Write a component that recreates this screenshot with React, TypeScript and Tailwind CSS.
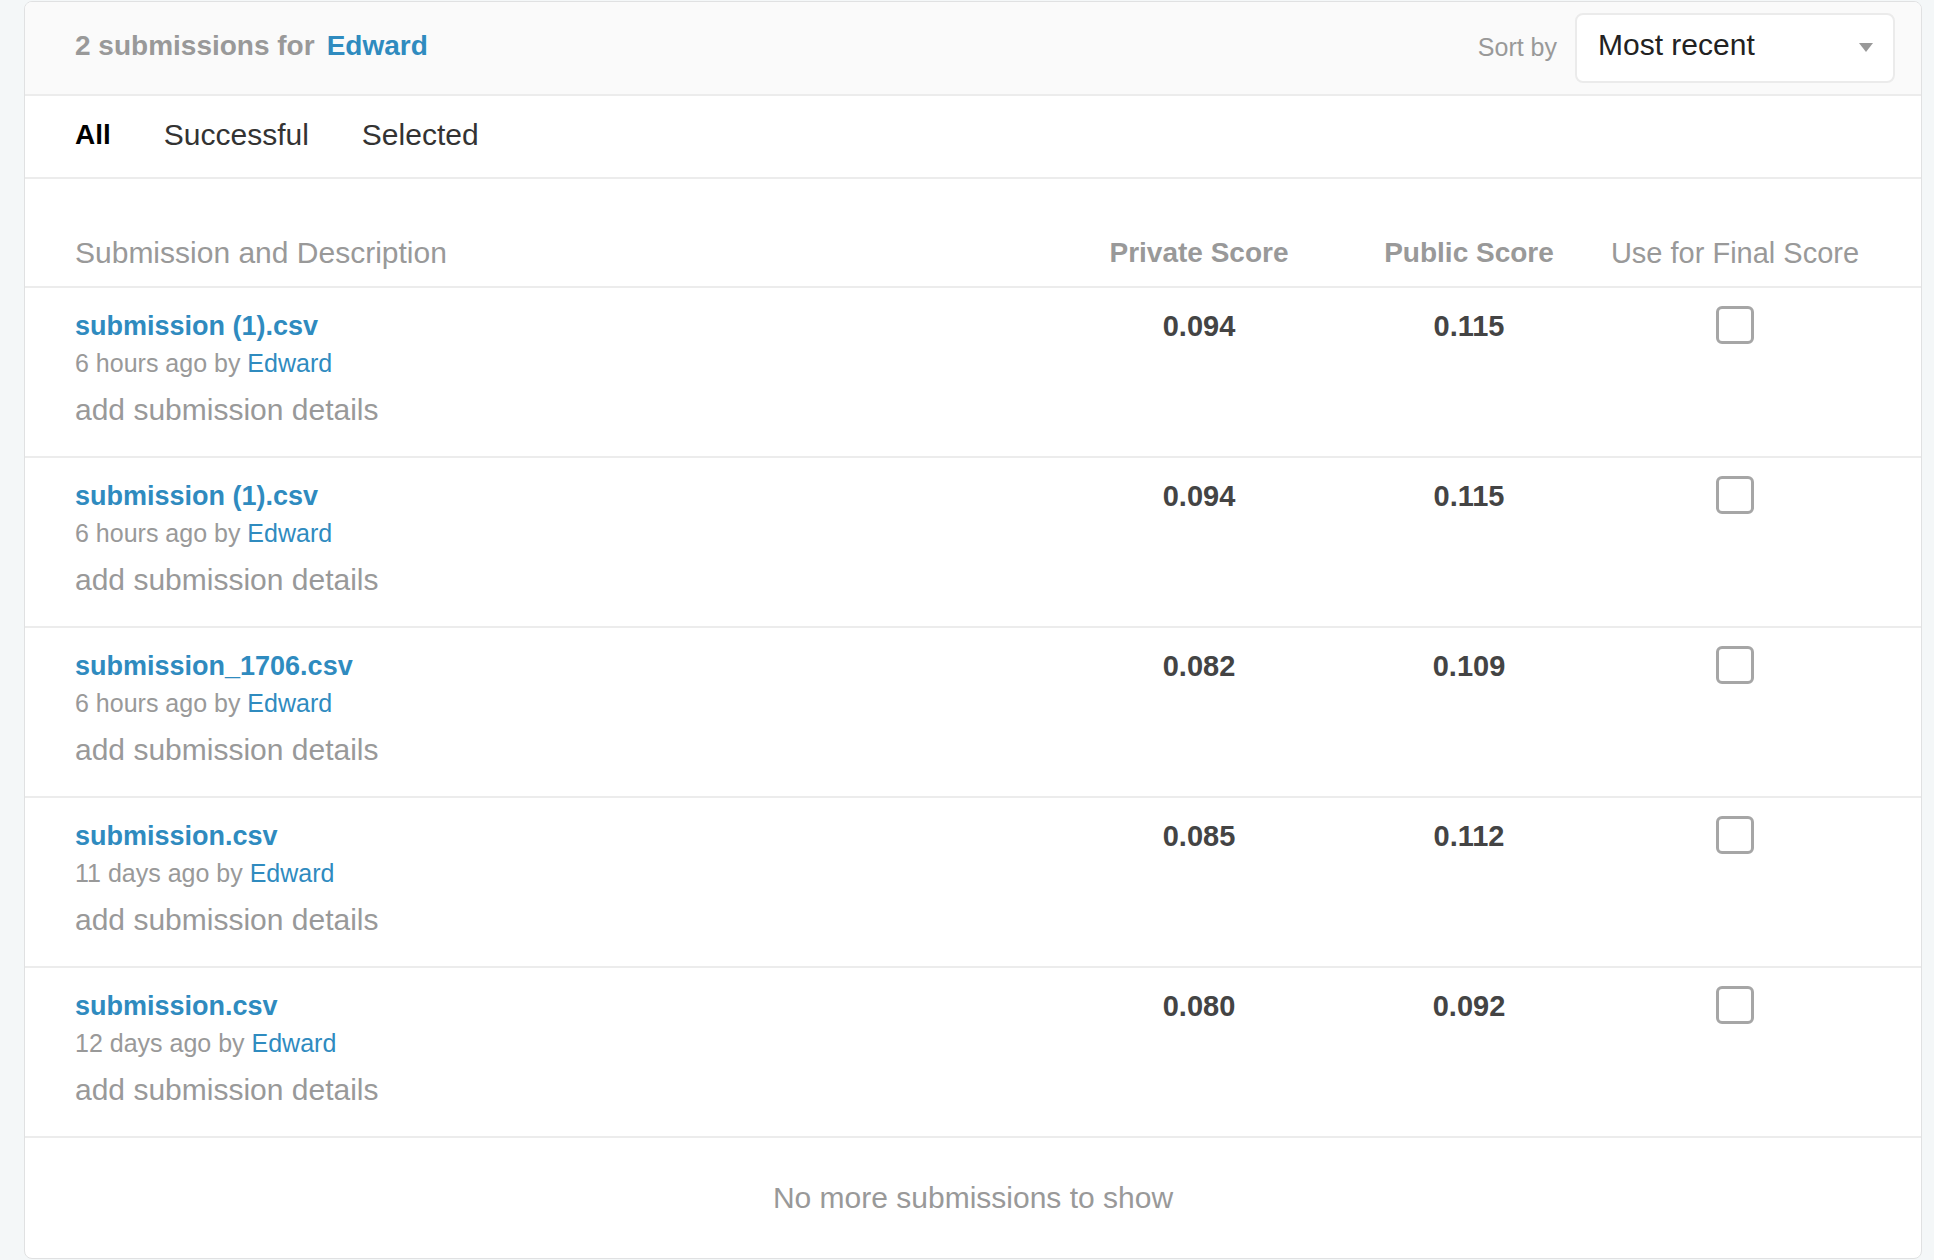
const submissions = [
  { name: 'submission (1).csv', ago: '6 hours ago', priv: '0.094', pub: '0.115' },
  { name: 'submission (1).csv', ago: '6 hours ago', priv: '0.094', pub: '0.115' },
  { name: 'submission_1706.csv', ago: '6 hours ago', priv: '0.082', pub: '0.109' },
  { name: 'submission.csv', ago: '11 days ago', priv: '0.085', pub: '0.112' },
  { name: 'submission.csv', ago: '12 days ago', priv: '0.080', pub: '0.092' },
];

const SubmissionRow = ({ name, ago, priv, pub }: { name: string; ago: string; priv: string; pub: string }) => (
  <div className="grid h-[170px] grid-cols-[1fr_280px_260px_272px] border-b-2 border-[#ececec] px-[50px] pt-[21px]">
    <div>
      <a href="#" className="block text-[27px] font-bold leading-[34px] text-[#2f8bbf]">
        {name}
      </a>
      <div className="mt-[5px] text-[25px] leading-[30px] text-[#999]">
        {ago} by <a href="#" className="text-[#2f8bbf]">Edward</a>
      </div>
      <div className="mt-[14px] text-[30px] leading-[36px] text-[#999]">add submission details</div>
    </div>
    <div className="text-center text-[29px] font-bold leading-[34px] text-[#444]">{priv}</div>
    <div className="text-center text-[29px] font-bold leading-[34px] text-[#444]">{pub}</div>
    <div className="flex justify-center">
      <div className="mt-[-3px] h-[38px] w-[38px] rounded-[6px] border-[3px] border-[#a6a6a6] bg-white" />
    </div>
  </div>
);

export default function App() {
  return (
    <div className="min-h-screen bg-[#f4f7f8] pl-[24px] pr-[12px] pt-[1px] font-['Liberation_Sans',Arial,sans-serif]">
      <div className="overflow-hidden rounded-[8px] border border-[#e0e1e2] bg-white">
        {/* header */}
        <div className="flex h-[94px] items-center justify-between border-b-2 border-[#ececec] bg-[#fafafa] pl-[50px] pr-[26px]">
          <h2 className="mb-[4px] text-[28px] font-bold leading-[34px] text-[#999]">
            2 submissions for<span className="ml-[12px] text-[#2f8bbf]">Edward</span>
          </h2>
          <div className="flex items-center gap-[18px]">
            <span className="text-[25px] text-[#999]">Sort by</span>
            <div className="flex h-[70px] w-[320px] items-center justify-between rounded-[8px] border-2 border-[#ebebeb] bg-white pl-[21px] pr-[20px]">
              <span className="mb-[6px] text-[30px] leading-[36px] text-[#222]">Most recent</span>
              <svg width="14" height="9" viewBox="0 0 14 9" className="mb-[2px]">
                <polygon points="0,0 14,0 7,9" fill="#999" />
              </svg>
            </div>
          </div>
        </div>

        {/* tabs */}
        <div className="flex h-[83px] gap-[53px] border-b-2 border-[#ececec] pl-[50px] pt-[21px] leading-[36px]">
          <span className="text-[28px] font-bold text-black">All</span>
          <span className="text-[30px] text-[#333]">Successful</span>
          <span className="text-[30px] text-[#333]">Selected</span>
        </div>

        {/* column headings */}
        <div className="grid h-[109px] grid-cols-[1fr_280px_260px_272px] items-end border-b-2 border-[#ececec] px-[50px] pb-[15px] leading-[36px]">
          <div className="text-[30px] text-[#999]">Submission and Description</div>
          <div className="text-center text-[28px] font-bold text-[#999]">Private Score</div>
          <div className="text-center text-[28px] font-bold text-[#999]">Public Score</div>
          <div className="text-center text-[29px] text-[#999]">Use for Final Score</div>
        </div>

        {submissions.map((s, i) => (
          <SubmissionRow key={i} {...s} />
        ))}

        <div className="py-[42px] text-center text-[30px] leading-[36px] text-[#999]">No more submissions to show</div>
      </div>
    </div>
  );
}
